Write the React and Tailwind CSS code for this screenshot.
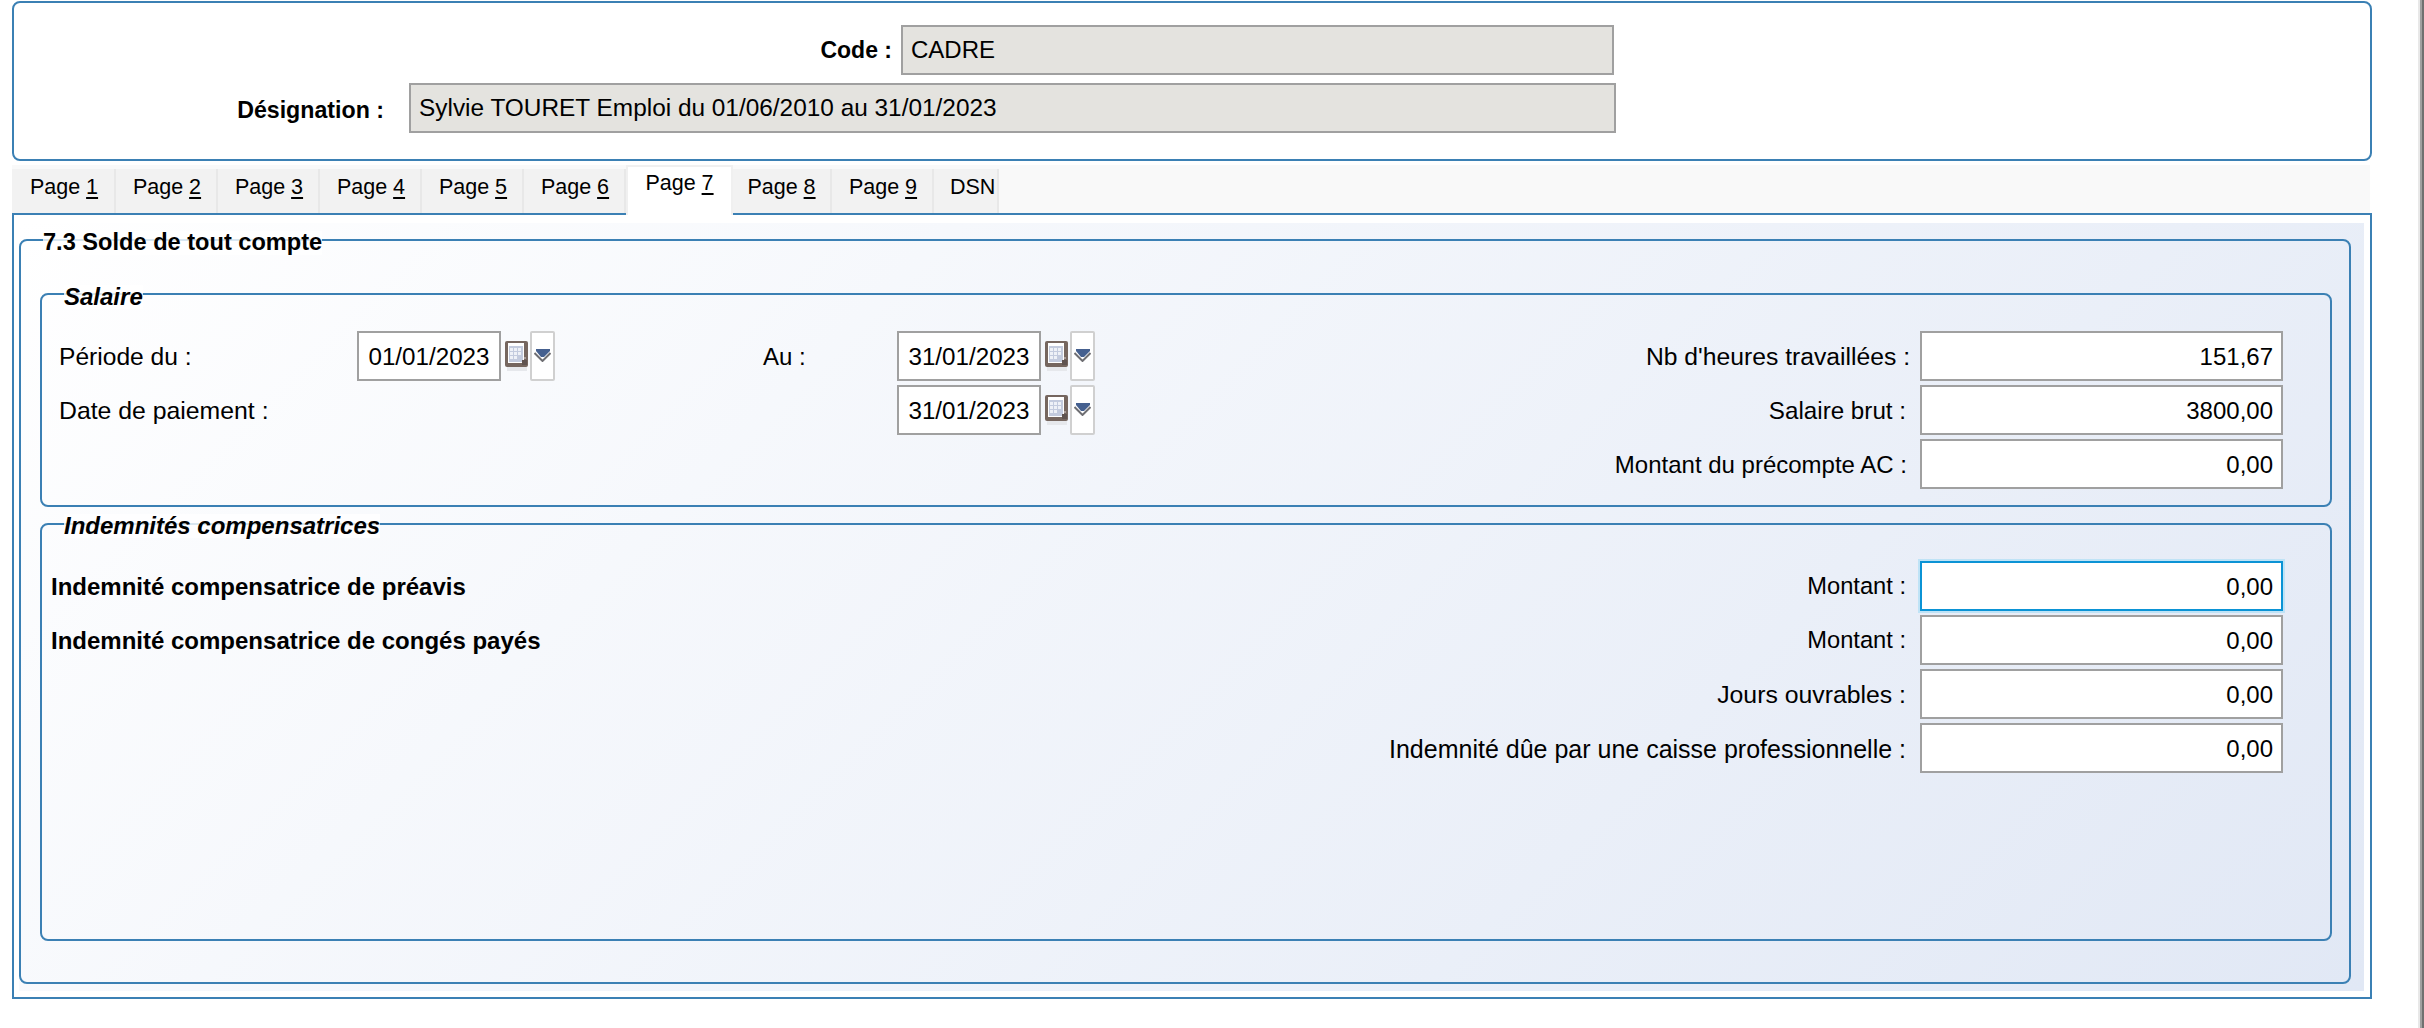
import React from 'react';

const Input = ({ value, focused, className = '' }) => (
  <div
    className={`flex h-[50px] shrink-0 items-center justify-end border-2 bg-white pt-[2px] pr-2 text-[24px] leading-none text-black ${
      focused ? 'border-[#0b93d5] shadow-[0_0_0_2px_#bfe3f6]' : 'border-[#a0a0a0]'
    } ${className}`}>
    {value}
  </div>
);

const CalendarIcon = () => (
  <svg width="24" height="30" viewBox="0 0 24 30" className="shrink-0">
    <rect x="2" y="25" width="20" height="5" fill="#e6e8ec" />
    <rect x="0" y="0" width="23" height="26" rx="2" fill="#75665f" />
    <rect x="3" y="2" width="16" height="20" fill="#ffffff" />
    <rect x="4" y="5" width="14" height="16" fill="#c3cbde" />
    <g fill="#eef1f7">
      <rect x="5" y="7" width="3" height="3" />
      <rect x="9" y="7" width="3" height="3" />
      <rect x="13" y="7" width="3" height="3" />
      <rect x="5" y="11" width="3" height="3" />
      <rect x="9" y="11" width="3" height="3" />
      <rect x="13" y="11" width="3" height="3" />
      <rect x="5" y="15" width="3" height="3" />
      <rect x="9" y="15" width="3" height="3" />
    </g>
    <rect x="17" y="19" width="5" height="5" fill="#5f5350" />
    <rect x="19" y="16" width="2" height="2" fill="#a89c98" />
  </svg>
);

const ArrowButton = () => (
  <div className="flex h-[50px] w-[25px] shrink-0 justify-center rounded-[2px] border-2 border-[#d0d0d0] bg-white pt-[16px]">
    <svg width="17" height="13" viewBox="0 0 17 13" className="shrink-0">
      <polyline points="0.5,4 8.5,12 16.5,4" fill="none" stroke="#6e6e72" strokeWidth="2" />
      <polygon points="2,0 16,0 16,2 10,8 7,8 2,2" fill="#45608f" />
    </svg>
  </div>
);

const DateField = ({ value }) => (
  <div className="flex items-center">
    <div className="flex h-[50px] w-[144px] items-center justify-center border-2 border-[#a0a0a0] bg-white pt-[2px] text-[24.2px] leading-none text-black">
      {value}
    </div>
    <div className="ml-[4px] mr-px">
      <CalendarIcon />
    </div>
    <ArrowButton />
  </div>
);

const Legend = ({ children, className = '' }) => (
  <span className={`absolute bg-white/80 leading-none text-black ${className}`}>{children}</span>
);

const MoneyRow = ({ label, value, focused, labelClass = 'mr-[14px] text-[24px]' }) => (
  <div className="flex h-[50px] items-center justify-end">
    <span className={`whitespace-nowrap pt-[2px] leading-none text-black ${labelClass}`}>{label}</span>
    <Input value={value} focused={focused} className="w-[363px]" />
  </div>
);

const tabs = [
  { num: '1', cls: 'w-[104px] pl-[2px]' },
  { num: '2', cls: 'w-[102px] pl-[2px]' },
  { num: '3', cls: 'w-[102px] pl-[2px]' },
  { num: '4', cls: 'w-[102px] pl-[2px]' },
  { num: '5', cls: 'w-[102px] pl-[2px]' },
  { num: '6', cls: 'w-[102px] pl-[2px]' },
  { num: '7', cls: 'w-[107px]' },
  { num: '8', cls: 'w-[99px]' },
  { num: '9', cls: 'w-[102px] pl-[2px]' },
];

const Tabs = () => (
  <div className="flex h-[48px] w-[2358px] items-end bg-[#f9f9f9]">
    {tabs.map(({ num, cls }) => {
      const active = num === '7';
      return (
        <div
          key={num}
          className={`flex shrink-0 justify-center text-[21.5px] leading-none text-black ${cls} ${
            active
              ? 'relative z-10 -mb-[2px] h-[50px] border-x-2 border-t-2 border-[#f0f0f0] bg-white pt-[6px]'
              : 'h-[44px] border-r-2 border-[#e8e8e8] bg-[#f2f2f2] pt-[8px]'
          }`}>
          <span className="whitespace-pre">
            Page <u className="underline-offset-[3px]">{num}</u>
          </span>
        </div>
      );
    })}
    <div className="h-[44px] w-[65px] shrink-0 border-r-2 border-[#e8e8e8] bg-[#f2f2f2] pt-[8px] pl-[16px] text-[21.5px] leading-none text-black">
      DSN
    </div>
  </div>
);

const App = () => {
  return (
    <div className="flex h-[1028px] w-[2424px] overflow-hidden bg-white font-['Liberation_Sans',Arial,sans-serif]">
      <div className="flex w-[2418px] flex-col pl-3 pt-px">
        {/* Header */}
        <div className="flex h-[160px] w-[2360px] flex-col rounded-[8px] border-2 border-[#3b80b4] pt-[22px]">
          <div className="flex items-center">
            <span className="w-[878px] text-right text-[23px] leading-none font-bold text-black">Code :</span>
            <div className="ml-[9px] flex h-[50px] w-[713px] items-center border-2 border-[#a0a0a0] bg-[#e4e3df] pl-[8px] text-[24px] leading-none text-black">
              CADRE
            </div>
          </div>
          <div className="mt-[8px] flex items-center">
            <span className="mt-[6px] w-[370px] text-right text-[23.2px] leading-none font-bold text-black">Désignation :</span>
            <div className="ml-[25px] flex h-[50px] w-[1207px] items-center border-2 border-[#a0a0a0] bg-[#e4e3df] pl-[8px] text-[24.4px] leading-none text-black">
              Sylvie TOURET Emploi du 01/06/2010 au 31/01/2023
            </div>
          </div>
        </div>

        <div className="mt-[4px]">
          <Tabs />
        </div>

        {/* Page content */}
        <div className="h-[786px] w-[2360px] border-2 border-[#3b80b4] pt-[8px] pl-[5px]">
          <div className="h-[768px] w-[2345px] bg-linear-135 from-[#ffffff] to-[#e1e8f5] pt-[16px]">
            <div className="relative h-[745px] w-[2332px] rounded-[8px] border-2 border-[#3b80b4] pt-[52px] pl-[19px]">
              <Legend className="-top-[10px] left-[22px] text-[23.6px] font-bold">7.3 Solde de tout compte</Legend>

              {/* Salaire */}
              <div className="relative h-[214px] w-[2292px] rounded-[8px] border-2 border-[#3b80b4] pt-[36px] pl-[17px] pr-[47px]">
                <Legend className="-top-[10px] left-[22px] text-[24px] font-bold italic">Salaire</Legend>
                <div className="flex items-start">
                  <div className="flex w-[298px] flex-col gap-[4px]">
                    <div className="flex h-[50px] items-center pt-[2px] text-[24.6px] leading-none text-black">Période du :</div>
                    <div className="flex h-[50px] items-center pt-[2px] text-[24.8px] leading-none text-black">Date de paiement :</div>
                  </div>
                  <DateField value="01/01/2023" />
                  <div className="ml-[208px] flex h-[50px] w-[134px] items-center pt-[2px] text-[24px] leading-none text-black">Au :</div>
                  <div className="flex flex-col gap-[4px]">
                    <DateField value="31/01/2023" />
                    <DateField value="31/01/2023" />
                  </div>
                  <div className="flex flex-1 flex-col gap-[4px]">
                    <MoneyRow label="Nb d'heures travaillées :" value="151,67" labelClass="mr-[10px] text-[24.7px]" />
                    <MoneyRow label="Salaire brut :" value="3800,00" labelClass="mr-[14px] text-[24.2px]" />
                    <MoneyRow label="Montant du précompte AC :" value="0,00" labelClass="mr-[13px] text-[24px]" />
                  </div>
                </div>
              </div>

              {/* Indemnités */}
              <div className="relative mt-[16px] h-[418px] w-[2292px] rounded-[8px] border-2 border-[#3b80b4] pt-[36px] pl-[9px] pr-[47px]">
                <Legend className="-top-[11px] left-[22px] text-[24px] font-bold italic">Indemnités compensatrices</Legend>
                <div className="flex items-start">
                  <div className="flex w-[700px] flex-col gap-[4px]">
                    <div className="flex h-[50px] items-center pt-[2px] text-[24px] leading-none font-bold text-black">
                      Indemnité compensatrice de préavis
                    </div>
                    <div className="flex h-[50px] items-center pt-[2px] text-[24px] leading-none font-bold text-black">
                      Indemnité compensatrice de congés payés
                    </div>
                  </div>
                  <div className="flex flex-1 flex-col gap-[4px]">
                    <MoneyRow label="Montant :" value="0,00" focused labelClass="mr-[14px] text-[23.7px]" />
                    <MoneyRow label="Montant :" value="0,00" labelClass="mr-[14px] text-[23.7px]" />
                    <MoneyRow label="Jours ouvrables :" value="0,00" labelClass="mr-[14px] text-[24.8px]" />
                    <MoneyRow label="Indemnité dûe par une caisse professionnelle :" value="0,00" labelClass="mr-[14px] text-[25px]" />
                  </div>
                </div>
              </div>
            </div>
          </div>
        </div>
      </div>
      {/* Window edge */}
      <div className="h-full w-[2px] bg-[#e8e8e8]" />
      <div className="h-full w-[2px] bg-[#a0a0a0]" />
      <div className="h-full w-[2px] bg-[#707070]" />
    </div>
  );
};

export default App;
